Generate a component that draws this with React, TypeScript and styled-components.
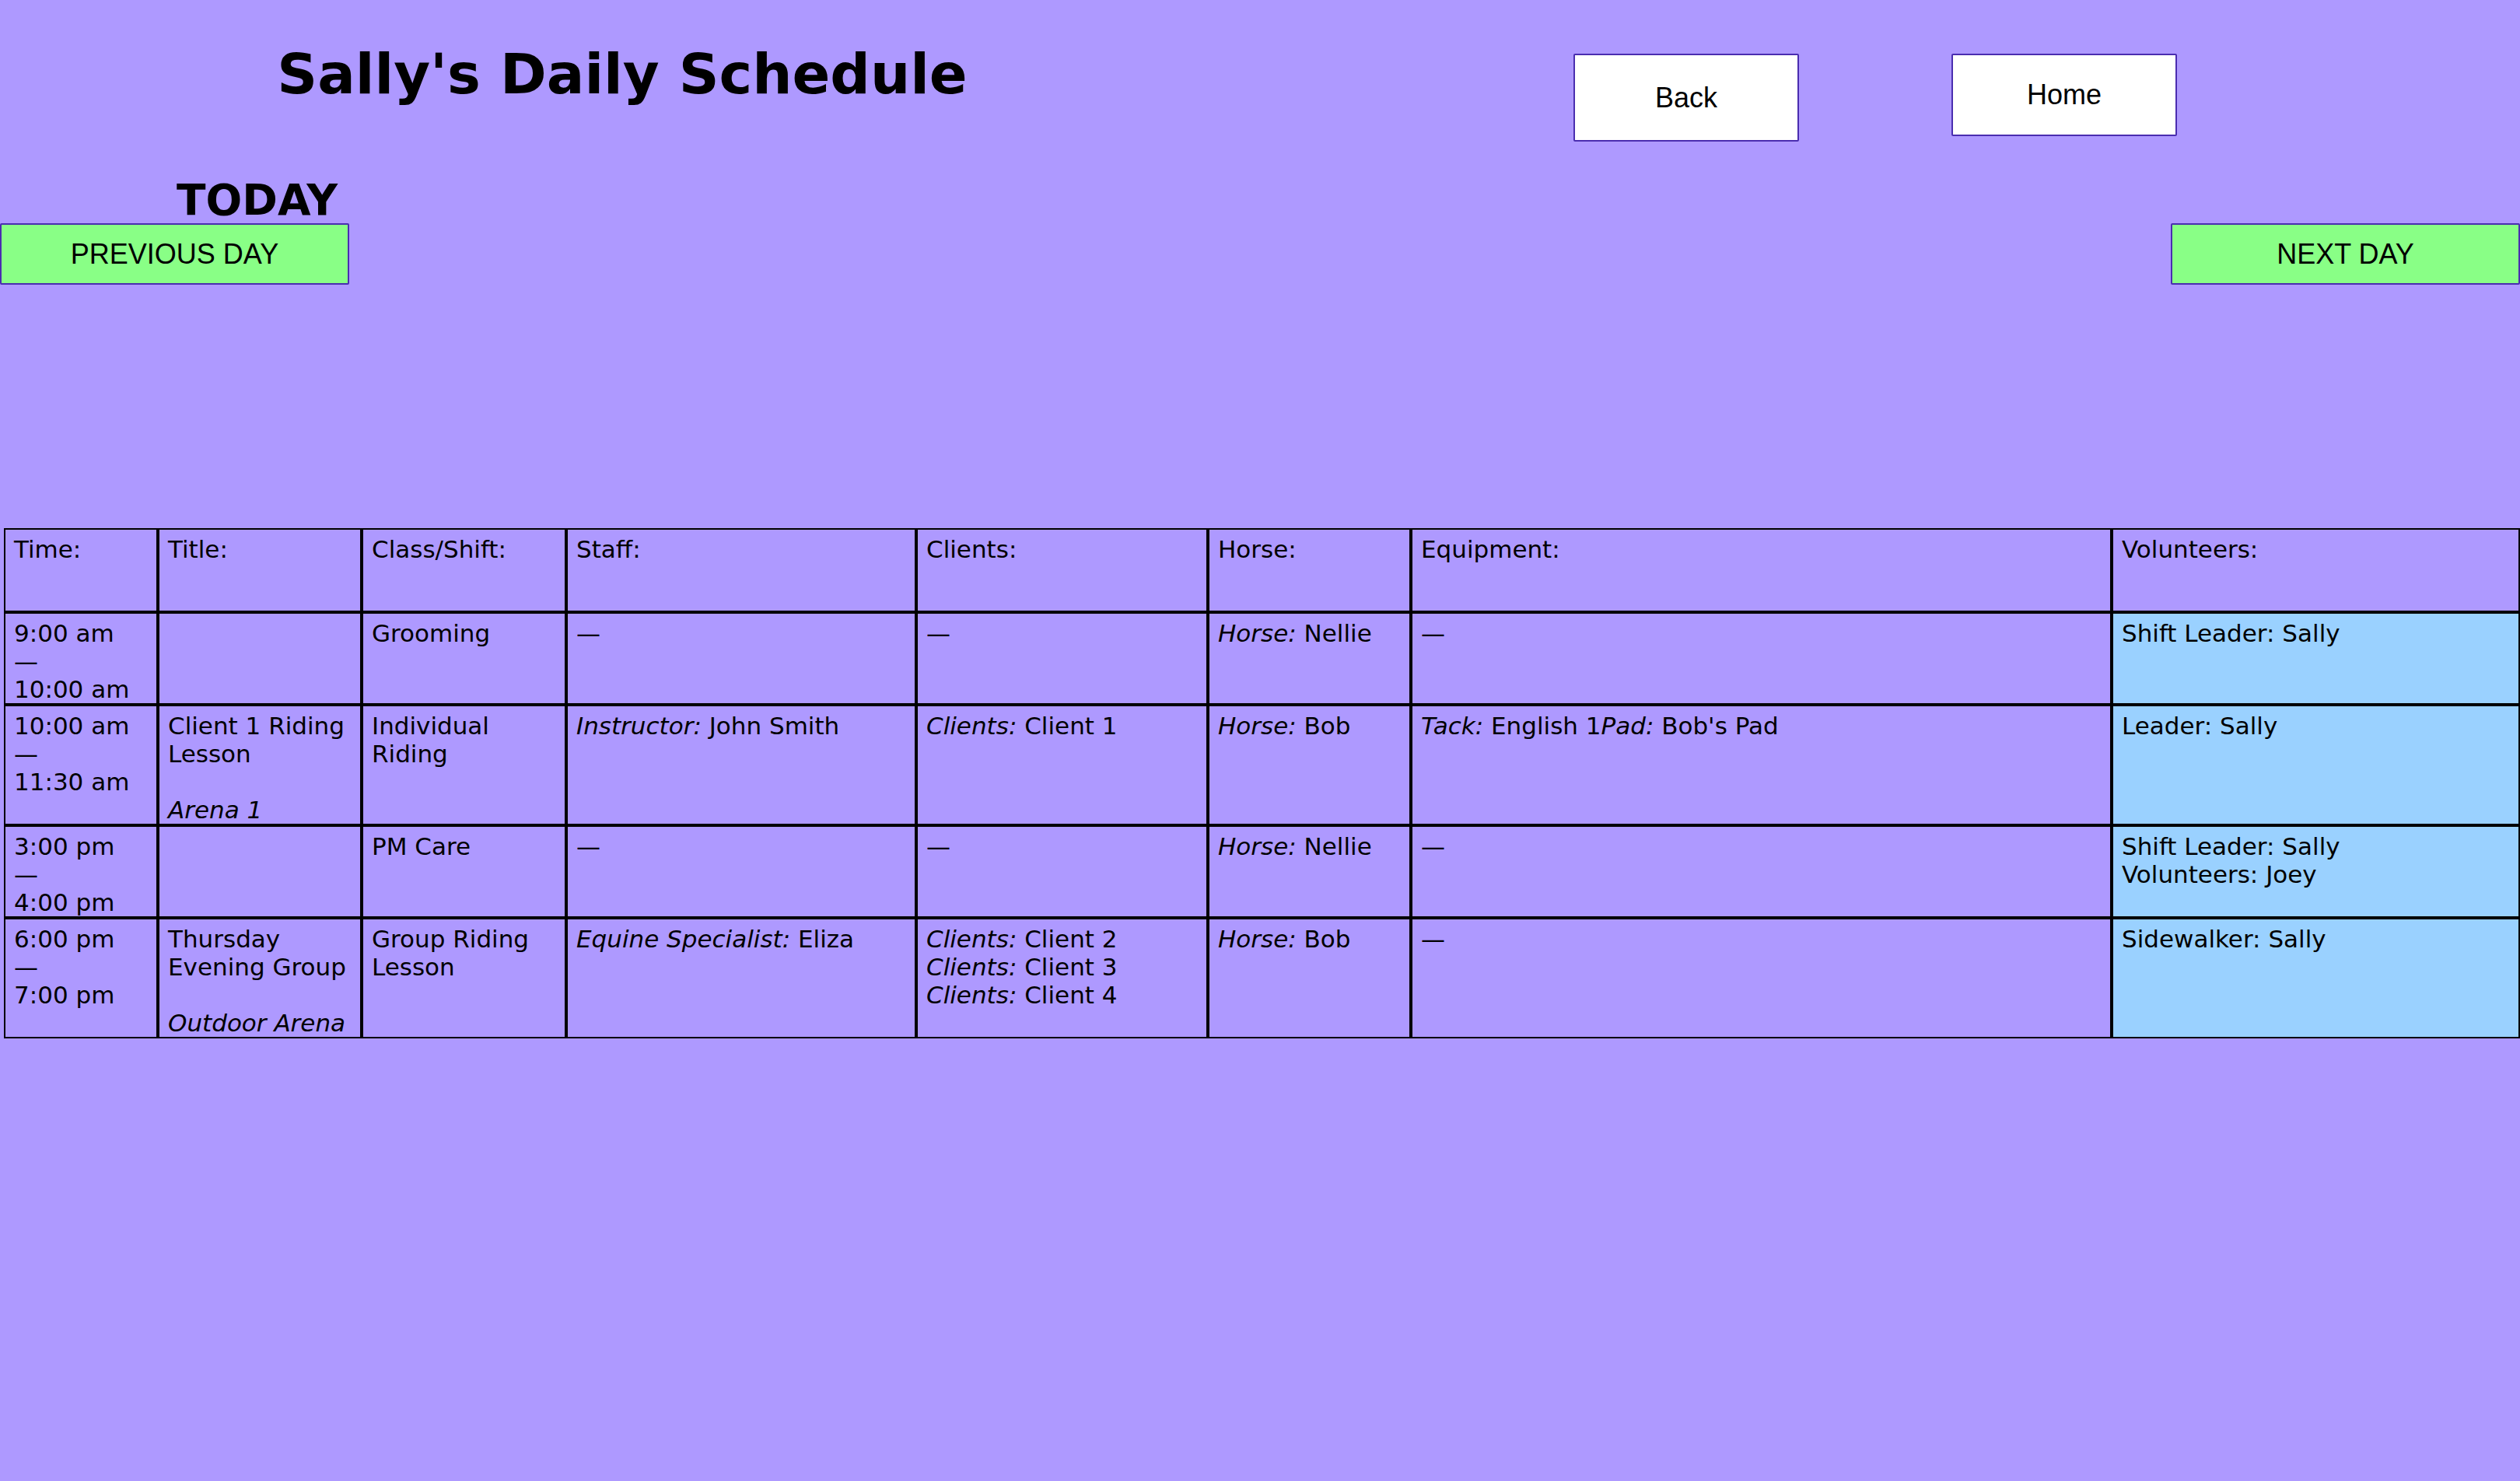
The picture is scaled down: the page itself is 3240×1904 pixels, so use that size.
import React from "react";
import styled, { createGlobalStyle } from "styled-components";

const GlobalStyle = createGlobalStyle`
  html, body {
    margin: 0;
    padding: 0;
    background: #ae99ff;
  }
  body {
    font-family: "DejaVu Sans", Verdana, sans-serif;
    color: #000;
  }
`;

const Page = styled.div`
  min-height: 1904px;
  background: #ae99ff;
  overflow: hidden;
`;

const TopBar = styled.header`
  display: grid;
  grid-template-columns: 1600px 1fr;
  align-items: start;
`;

const Title = styled.h1`
  margin: 59px 0 0;
  font-family: "DejaVu Sans", Verdana, sans-serif;
  font-weight: bold;
  font-size: 72px;
  line-height: 1;
  text-align: center;
`;

const NavButtons = styled.nav`
  display: flex;
  align-items: flex-start;
  gap: 196px;
  padding: 69px 0 0 423px;
`;

const NavButton = styled.button<{ $h: number }>`
  width: 290px;
  height: ${(p) => p.$h}px;
  box-sizing: border-box;
  background: #ffffff;
  border: 2px solid #4a2db0;
  border-radius: 2px;
  font-family: "Liberation Sans", Arial, sans-serif;
  font-size: 36px;
  color: #000;
  padding: 0;
  cursor: pointer;
`;

const DayLabel = styled.h2`
  margin: 48px 0 0 227px;
  font-family: "DejaVu Sans", Verdana, sans-serif;
  font-weight: bold;
  font-size: 55px;
  line-height: 54px;
`;

const DayNav = styled.div`
  display: flex;
  justify-content: space-between;
  margin-top: 3px;
`;

const DayButton = styled.button`
  width: 449px;
  height: 79px;
  box-sizing: border-box;
  background: #89ff86;
  border: 2px solid #4a2db0;
  border-radius: 2px;
  font-family: "Liberation Sans", Arial, sans-serif;
  font-size: 36px;
  color: #000;
  padding: 0;
  cursor: pointer;
`;

const ScheduleTable = styled.table`
  margin: 313px 0 0 5px;
  width: 3235px;
  table-layout: fixed;
  border-collapse: separate;
  border-spacing: 0;
  font-family: "DejaVu Sans", Verdana, sans-serif;
  font-size: 31px;
  line-height: 36px;
`;

const HeadCell = styled.th<{ $w: number }>`
  width: ${(p) => p.$w}px;
  height: 108px;
  box-sizing: border-box;
  border: 2px solid #000;
  padding: 7px 11px 0;
  text-align: left;
  vertical-align: top;
  font-weight: normal;
`;

const Cell = styled.td<{ $volunteer?: boolean }>`
  box-sizing: border-box;
  border: 2px solid #000;
  padding: 7px 11px 0;
  vertical-align: top;
  background: ${(p) => (p.$volunteer ? "#9ad1ff" : "transparent")};
`;

const Line = styled.div``;

const Label = styled.em`
  font-style: italic;
`;

const Location = styled.div`
  margin-top: 36px;
  font-style: italic;
`;

type Pair = [string, string];

interface Row {
  time: [string, string];
  title?: string;
  location?: string;
  cls: string;
  staff?: Pair[];
  clients?: Pair[];
  horse: string;
  equipment?: Pair[];
  volunteers: string[];
}

const columns: { label: string; w: number }[] = [
  { label: "Time:", w: 198 },
  { label: "Title:", w: 262 },
  { label: "Class/Shift:", w: 263 },
  { label: "Staff:", w: 450 },
  { label: "Clients:", w: 375 },
  { label: "Horse:", w: 261 },
  { label: "Equipment:", w: 901 },
  { label: "Volunteers:", w: 525 },
];

const rows: Row[] = [
  {
    time: ["9:00 am", "10:00 am"],
    cls: "Grooming",
    horse: "Nellie",
    volunteers: ["Shift Leader: Sally"],
  },
  {
    time: ["10:00 am", "11:30 am"],
    title: "Client 1 Riding Lesson",
    location: "Arena 1",
    cls: "Individual Riding",
    staff: [["Instructor", "John Smith"]],
    clients: [["Clients", "Client 1"]],
    horse: "Bob",
    equipment: [
      ["Tack", "English 1"],
      ["Pad", "Bob's Pad"],
    ],
    volunteers: ["Leader: Sally"],
  },
  {
    time: ["3:00 pm", "4:00 pm"],
    cls: "PM Care",
    horse: "Nellie",
    volunteers: ["Shift Leader: Sally", "Volunteers: Joey"],
  },
  {
    time: ["6:00 pm", "7:00 pm"],
    title: "Thursday Evening Group",
    location: "Outdoor Arena",
    cls: "Group Riding Lesson",
    staff: [["Equine Specialist", "Eliza"]],
    clients: [
      ["Clients", "Client 2"],
      ["Clients", "Client 3"],
      ["Clients", "Client 4"],
    ],
    horse: "Bob",
    volunteers: ["Sidewalker: Sally"],
  },
];

const PairLines: React.FC<{ items?: Pair[] }> = ({ items }) =>
  items && items.length ? (
    <>
      {items.map(([k, v], i) => (
        <Line key={i}>
          <Label>{k}:</Label> {v}
        </Line>
      ))}
    </>
  ) : (
    <>—</>
  );

export default function App() {
  return (
    <Page>
      <GlobalStyle />
      <TopBar>
        <Title>Sally's Daily Schedule</Title>
        <NavButtons>
          <NavButton $h={113}>Back</NavButton>
          <NavButton $h={106}>Home</NavButton>
        </NavButtons>
      </TopBar>
      <DayLabel>TODAY</DayLabel>
      <DayNav>
        <DayButton>PREVIOUS DAY</DayButton>
        <DayButton>NEXT DAY</DayButton>
      </DayNav>
      <ScheduleTable>
        <thead>
          <tr>
            {columns.map((c) => (
              <HeadCell key={c.label} $w={c.w}>
                {c.label}
              </HeadCell>
            ))}
          </tr>
        </thead>
        <tbody>
          {rows.map((r, i) => (
            <tr key={i}>
              <Cell>
                <Line>{r.time[0]}</Line>
                <Line>—</Line>
                <Line>{r.time[1]}</Line>
              </Cell>
              <Cell>
                {r.title && <Line>{r.title}</Line>}
                {r.location && <Location>{r.location}</Location>}
              </Cell>
              <Cell>{r.cls}</Cell>
              <Cell>
                <PairLines items={r.staff} />
              </Cell>
              <Cell>
                <PairLines items={r.clients} />
              </Cell>
              <Cell>
                <Label>Horse:</Label> {r.horse}
              </Cell>
              <Cell>
                {r.equipment && r.equipment.length
                  ? r.equipment.map(([k, v], j) => (
                      <React.Fragment key={j}>
                        <Label>{k}:</Label> {v}
                      </React.Fragment>
                    ))
                  : "—"}
              </Cell>
              <Cell $volunteer>
                {r.volunteers.map((v, j) => (
                  <Line key={j}>{v}</Line>
                ))}
              </Cell>
            </tr>
          ))}
        </tbody>
      </ScheduleTable>
    </Page>
  );
}
